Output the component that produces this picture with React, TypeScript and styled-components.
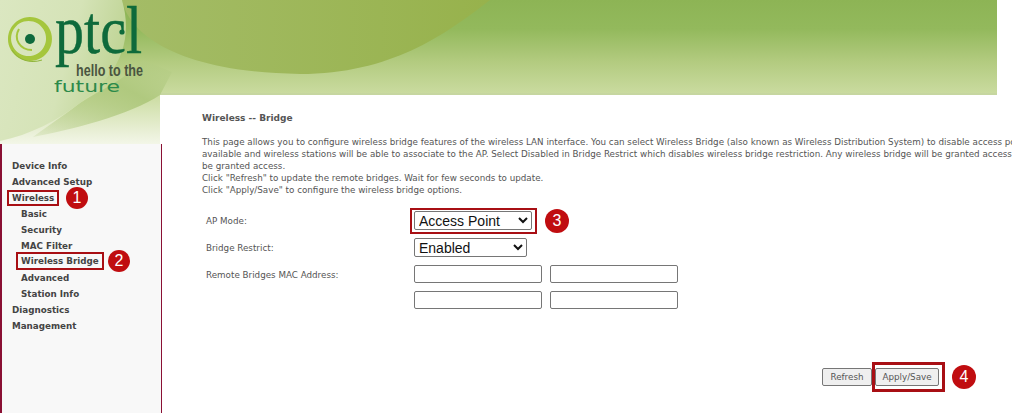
import styled, { createGlobalStyle } from 'styled-components'

const GlobalStyle = createGlobalStyle`
  html, body {
    margin: 0;
    padding: 0;
    background: #fff;
  }
`;

const Page = styled.div`
  position: relative;
  width: 1012px;
  height: 413px;
  overflow: hidden;
  font-family: "DejaVu Sans", Verdana, sans-serif;
  font-size: 8.76px;
  color: #555;
  display: flex;
  padding-top: 95px;
  box-sizing: border-box;
`;

const Banner = styled.svg`
  position: absolute;
  left: 0;
  top: 0;
`;

const Side = styled.nav`
  position: relative;
  z-index: 1;
  width: 162px;
  flex: none;
  margin: 49px -2px 0 0;
  padding-top: 14px;
  box-sizing: border-box;
  background: #f8f8f8;
  border-left: 2px solid #8a1034;
  border-right: 1px solid #8a1034;
`;

const NavItem = styled.div<{ $sub?: boolean }>`
  height: 16px;
  line-height: 16px;
  padding-left: ${p => (p.$sub ? 19 : 10)}px;
  font-size: 8.76px;
  font-weight: bold;
  color: #444;
  white-space: nowrap;
`;

const Marked = styled.span<{ $h: number }>`
  position: relative;
  display: inline-block;
  vertical-align: top;
  height: ${p => p.$h}px;
  line-height: ${p => p.$h}px;
  margin: ${p => 16 - p.$h - 2}px 0 0 -3px;
  padding: 0 3px 0 3px;
  outline: 2px solid #a80f14;
`;

const Badge = styled.span<{ $left: number; $size: number }>`
  position: absolute;
  left: ${p => p.$left}px;
  top: 50%;
  transform: translateY(-50%);
  width: ${p => p.$size}px;
  height: ${p => p.$size}px;
  border-radius: 50%;
  background: #c00d10;
  color: #fff;
  font-family: "Liberation Sans", Arial, sans-serif;
  font-size: 16px;
  font-weight: normal;
  line-height: ${p => p.$size}px;
  text-align: center;
`;

const Main = styled.main`
  position: relative;
  flex: 1;
  min-width: 0;
  background: #fff;
  padding: 17px 0 0 42px;
`;

const Title = styled.div`
  font-size: 9px;
  font-weight: bold;
  color: #555;
  height: 12px;
  line-height: 12px;
`;

const Intro = styled.div`
  margin-top: 12px;
  line-height: 12px;
  white-space: nowrap;
`;

const FormGrid = styled.div`
  margin-top: 11px;
  display: grid;
  grid-template-columns: 212px 1fr;
  grid-template-rows: 27px 27px 26px 26px;
  align-items: center;
`;

const Label = styled.div`
  padding-left: 4px;
  padding-top: 1px;
`;

const Select = styled.select<{ $width: number }>`
  width: ${p => p.$width}px;
  height: 19px;
  box-sizing: border-box;
  display: block;
  background: #fff;
  border: 1px solid #767676;
  border-radius: 2px;
  font-family: "Liberation Sans", Arial, sans-serif;
  font-size: 14px;
  color: #111;
  padding: 0;
`;

const MacRow = styled.div`
  display: flex;
  gap: 8px;
`;

const MacInput = styled.input`
  width: 128px;
  height: 18px;
  box-sizing: border-box;
  border: 1px solid #767676;
  border-radius: 2px;
  padding: 0;
  background: #fff;
`;

const Actions = styled.div`
  margin-top: 55px;
  margin-left: 620px;
  display: flex;
  gap: 3px;
  width: max-content;
`;

const Btn = styled.button<{ $width: number }>`
  display: block;
  width: ${p => p.$width}px;
  height: 18px;
  box-sizing: border-box;
  padding: 0;
  font-family: "DejaVu Sans", Verdana, sans-serif;
  font-size: 8.76px;
  color: #555;
  background: #efefef;
  border: 1px solid #767676;
  border-radius: 2px;
`;

const SelectFrame = styled.div`
  position: relative;
  width: max-content;
  margin: -3px 0 -3px -4px;
  padding: 1px 3px 2px 2px;
  border: 2px solid #a80f14;
`;

const ButtonFrame = styled.div`
  position: relative;
  width: max-content;
  margin: -6px -6px -6px -3px;
  padding: 3px 3px 3px 0;
  border: 3px solid #a80f14;
`;

export default function App() {
  return (
    <>
      <GlobalStyle />
      <Page>
        <Banner width="997" height="144" viewBox="0 0 997 144">
          <defs>
            <linearGradient id="sky" gradientUnits="userSpaceOnUse" x1="0" y1="0" x2="0" y2="144">
              <stop offset="0" stopColor="#8db455" />
              <stop offset="0.2" stopColor="#93b95c" />
              <stop offset="0.43" stopColor="#b3cb80" />
              <stop offset="0.66" stopColor="#cbdca1" />
              <stop offset="1" stopColor="#f3f6e8" />
            </linearGradient>
            <linearGradient id="pale" x1="0" y1="0" x2="1" y2="0.3">
              <stop offset="0" stopColor="#dbe7c1" />
              <stop offset="0.6" stopColor="#d5e3b7" />
              <stop offset="1" stopColor="#bfd495" />
            </linearGradient>
            <linearGradient id="wedge" x1="1" y1="0" x2="0" y2="1">
              <stop offset="0" stopColor="#b4cc84" stopOpacity="0.3" />
              <stop offset="0.35" stopColor="#b0c97f" />
              <stop offset="1" stopColor="#b0c97f" stopOpacity="0.2" />
            </linearGradient>
            <linearGradient id="olive" x1="0" y1="0" x2="1" y2="0">
              <stop offset="0" stopColor="#a4bc67" />
              <stop offset="1" stopColor="#97b24c" />
            </linearGradient>
          </defs>
          <rect width="997" height="144" fill="url(#sky)" />
          <rect x="160" y="93" width="837" height="2" fill="#c6d6a0" />
          <path d="M122 0 C128 30 170 72 300 74 C390 74 445 35 490 0 Z" fill="url(#olive)" />
          <path d="M143 60 C125 80 100 90 80 103 C60 118 45 128 33 137 C70 130 130 115 160 95 L172 72 Z" fill="url(#wedge)" />
          <path d="M122 0 C132 35 125 70 80 103 C58 120 30 135 0 141 V0 Z" fill="url(#pale)" />

          {/* logo */}
          <path
            fillRule="evenodd"
            d="M30 17 A22 22 0 1 1 29.9 17 Z M28.5 21 A17.5 17.5 0 1 0 28.6 21 Z"
            fill="#a5c63c"
          />
          <path d="M19 29 C13 39 20 50 32 50" fill="none" stroke="#a5c63c" strokeWidth="2" />
          <path d="M12 50 C18 60 30 64 42 60" fill="none" stroke="#8fb43a" strokeWidth="1" />
          <circle cx="30" cy="39" r="5" fill="#0f6a3c" />
          <text x="55" y="53" fontFamily="Liberation Serif" fontSize="67" fill="#0e6a3b" stroke="#0e6a3b" strokeWidth="0.4" textLength="87" lengthAdjust="spacingAndGlyphs">ptcl</text>
          <circle cx="122" cy="32" r="2.6" fill="#0e6a3b" />
          <text x="76" y="76" fontFamily="Liberation Sans" fontWeight="bold" fontSize="17" fill="#4a5540" textLength="67" lengthAdjust="spacingAndGlyphs">hello to the</text>
          <text x="54" y="92" fontFamily="DejaVu Sans" fontSize="15" fill="#2c8a4a" textLength="66" lengthAdjust="spacingAndGlyphs">future</text>
        </Banner>

        <Side>
          <NavItem>Device Info</NavItem>
          <NavItem>Advanced Setup</NavItem>
          <NavItem>
            <Marked $h={12}>Wireless<Badge $left={57} $size={22}>1</Badge></Marked>
          </NavItem>
          <NavItem $sub>Basic</NavItem>
          <NavItem $sub>Security</NavItem>
          <NavItem $sub>MAC Filter</NavItem>
          <NavItem $sub>
            <Marked $h={14}>Wireless Bridge<Badge $left={90} $size={22}>2</Badge></Marked>
          </NavItem>
          <NavItem $sub>Advanced</NavItem>
          <NavItem $sub>Station Info</NavItem>
          <NavItem>Diagnostics</NavItem>
          <NavItem>Management</NavItem>
        </Side>

        <Main>
          <Title>Wireless -- Bridge</Title>
          <Intro>
            This page allows you to configure wireless bridge features of the wireless LAN interface. You can select Wireless Bridge (also known as Wireless Distribution System) to disable access point functionality.<br />
            available and wireless stations will be able to associate to the AP. Select Disabled in Bridge Restrict which disables wireless bridge restriction. Any wireless bridge will be granted access<br />
            be granted access.<br />
            Click "Refresh" to update the remote bridges. Wait for few seconds to update.<br />
            Click "Apply/Save" to configure the wireless bridge options.
          </Intro>
          <FormGrid>
            <Label>AP Mode:</Label>
            <SelectFrame>
              <Select $width={118} defaultValue="Access Point">
                <option>Access Point</option>
              </Select>
              <Badge $left={133} $size={24}>3</Badge>
            </SelectFrame>
            <Label>Bridge Restrict:</Label>
            <Select $width={113} defaultValue="Enabled">
              <option>Enabled</option>
            </Select>
            <Label>Remote Bridges MAC Address:</Label>
            <MacRow>
              <MacInput />
              <MacInput />
            </MacRow>
            <span />
            <MacRow>
              <MacInput />
              <MacInput />
            </MacRow>
          </FormGrid>
          <Actions>
            <Btn $width={50}>Refresh</Btn>
            <ButtonFrame>
              <Btn $width={64}>Apply/Save</Btn>
              <Badge $left={77} $size={24}>4</Badge>
            </ButtonFrame>
          </Actions>
        </Main>
      </Page>
    </>
  );
}
